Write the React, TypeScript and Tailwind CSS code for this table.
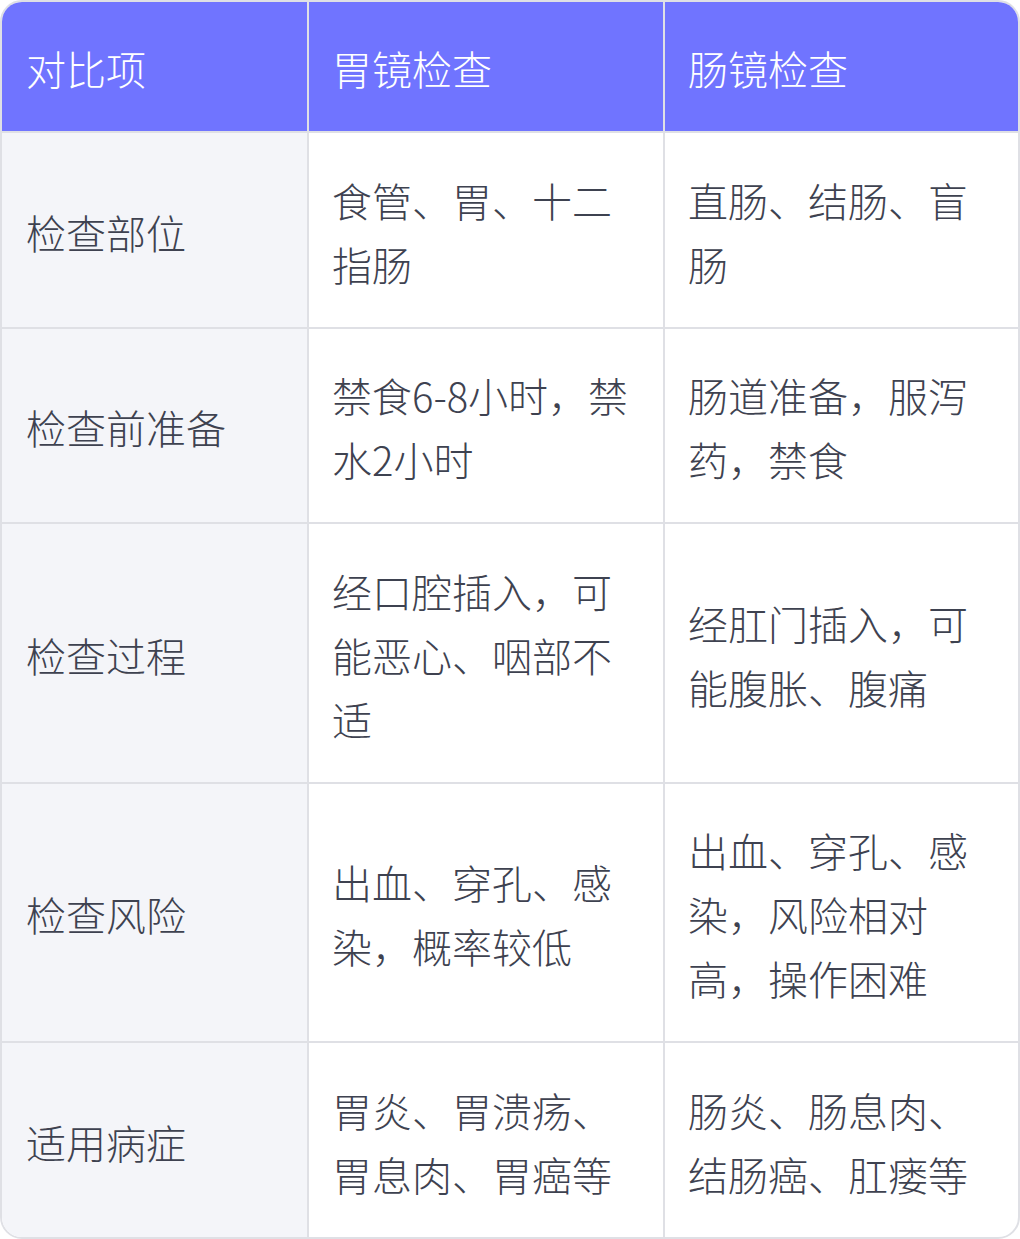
const head = ["对比项", "胃镜检查", "肠镜检查"];

const rows = [
  ["检查部位", "食管、胃、十二指肠", "直肠、结肠、盲肠"],
  ["检查前准备", "禁食6-8小时，禁水2小时", "肠道准备，服泻药，禁食"],
  ["检查过程", "经口腔插入，可能恶心、咽部不适", "经肛门插入，可能腹胀、腹痛"],
  ["检查风险", "出血、穿孔、感染，概率较低", "出血、穿孔、感染，风险相对高，操作困难"],
  ["适用病症", "胃炎、胃溃疡、胃息肉、胃癌等", "肠炎、肠息肉、结肠癌、肛瘘等"],
];

export default function App() {
  return (
    <div
      className="w-[1020px] h-[1239px] bg-white"
      style={{ fontFamily: '"Noto Sans CJK SC", "Noto Sans", sans-serif' }}
    >
      <div className="h-full border-2 border-[#dfe0e5] rounded-[22px] overflow-hidden text-[40px] leading-[64px] font-light text-[#3e4250]">
        <div className="grid grid-cols-[305px_356px_1fr] bg-[#7074ff] text-white">
          {head.map((h, i) => (
            <div
              key={h}
              className={
                i === 0
                  ? "pl-[24px] pr-6 pt-[34px] pb-[31px]"
                  : "pl-[23px] pr-6 pt-[34px] pb-[31px] border-l-2 border-[#dfe0e5]"
              }
            >
              {h}
            </div>
          ))}
        </div>
        {rows.map((r) => (
          <div
            key={r[0]}
            className="grid grid-cols-[305px_356px_1fr] border-t-2 border-[#dfe0e5]"
          >
            <div className="bg-[#f4f5f9] pl-[24px] pr-6 flex items-center pt-[34.5px] pb-[31px]">
              {r[0]}
            </div>
            <div className="border-l-2 border-[#dfe0e5] pl-[23px] pr-6 flex items-center pt-[34.5px] pb-[31px]">
              {r[1]}
            </div>
            <div className="border-l-2 border-[#dfe0e5] pl-[23px] pr-6 flex items-center pt-[34.5px] pb-[31px]">
              {r[2]}
            </div>
          </div>
        ))}
      </div>
    </div>
  );
}
